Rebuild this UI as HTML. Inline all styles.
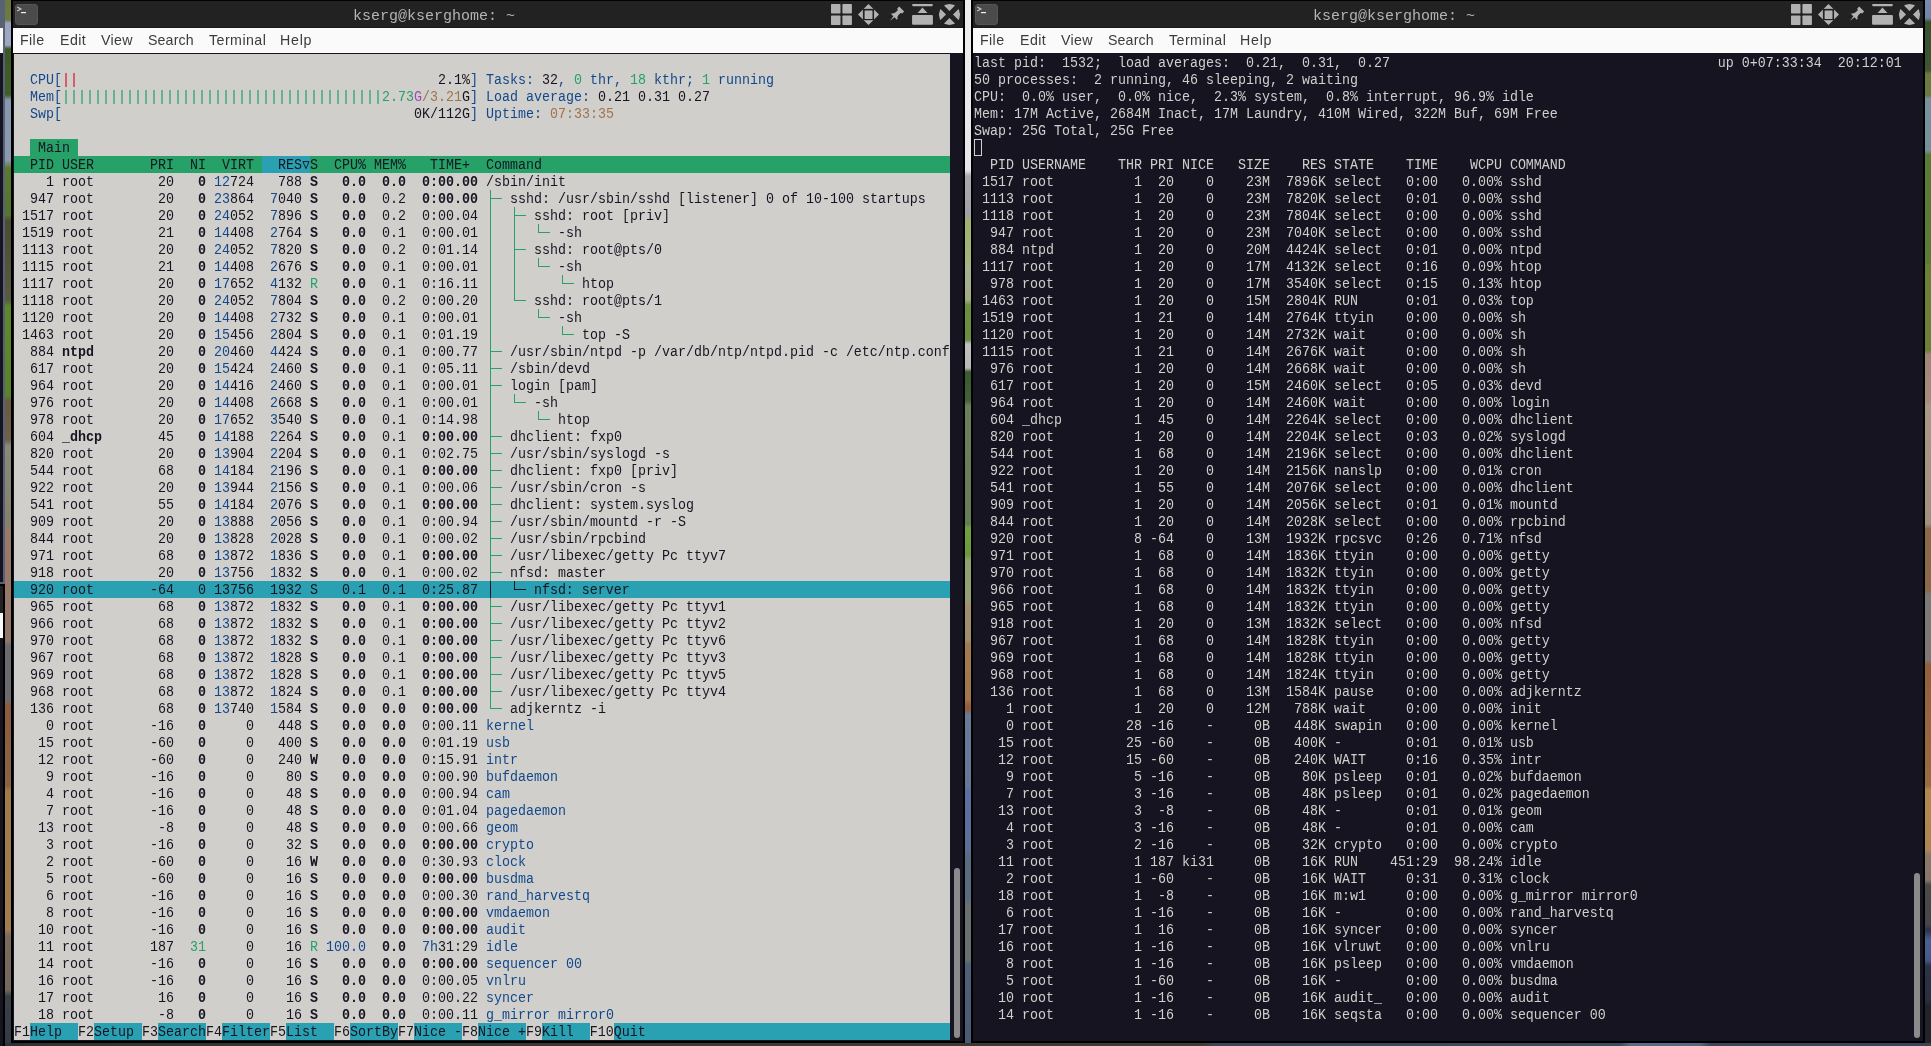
<!DOCTYPE html>
<html><head><meta charset="utf-8"><title>terminals</title><style>
html,body{margin:0;padding:0}
body{width:1931px;height:1046px;overflow:hidden;position:relative;background:#3c4438}
i{position:absolute;display:block}
p{position:absolute;margin:0;padding:0;white-space:pre;height:17px;line-height:17px;font-family:"Liberation Mono",monospace;font-size:13.333px;letter-spacing:0.0000px;font-weight:normal;transform-origin:0 12px;transform:translateY(1px) scaleY(1.1)}
#h,#t,.menu,.title{will-change:transform}
#h p{color:#171421}
#t p{color:#d0cfcc}
b{font-weight:normal}
b.B{font-weight:bold}
b.b_{color:#12488b}
b.g_{color:#26a269}
b.y_{color:#a2734c}
b.m_{color:#a347ba}
b.r_{color:#c01c28}
.title{position:absolute;top:4px;height:26px;line-height:25px;text-align:center;color:#b4b4b4;font-family:"Liberation Mono",monospace;font-size:15px;letter-spacing:0.0000px;white-space:pre}
.menu{position:absolute;top:28px;height:25px;line-height:25px;color:#3b3b3b;font-family:"Liberation Sans",sans-serif;font-size:14.2px;white-space:pre}
</style></head><body>
<i style="left:5px;top:0;width:6px;height:1046px;background:linear-gradient(#6a7840 0.00%,#6f7a48 1.91%,#9aa4c0 2.20%,#a0a8c4 4.30%,#3c5828 4.68%,#40602a 9.08%,#8898b0 9.56%,#8a9ab0 15.30%,#5a7a30 16.06%,#557530 20.55%,#4c4c32 21.13%,#5a5a40 28.68%,#5c8a2a 29.25%,#5a8428 37.76%,#6a5a40 38.43%,#70604a 42.07%,#8a8a78 42.64%,#84806e 50.10%,#9a7a68 50.76%,#94766a 61.19%,#6a6a70 61.76%,#6c6a6e 66.92%,#8a5c42 67.50%,#8a6244 75.14%,#a07a4a 75.62%,#a07c50 88.91%,#7a6a5a 89.48%,#74685c 94.65%,#3a4048 95.22%,#333a44 100.00%)"></i>
<i style="left:965px;top:0;width:6px;height:1046px;background:linear-gradient(#eeeef0 0.00%,#e6e6ea 16.25%,#a8a8b0 16.83%,#a0a0a8 20.55%,#a0b070 21.13%,#a4b27c 25.05%,#a8b090 25.62%,#a0ac84 28.68%,#6a9040 29.16%,#6a8c44 32.50%,#c0c0c0 32.89%,#b8b8b8 35.18%,#3a5a30 35.56%,#42603a 38.24%,#6a8058 38.81%,#667c54 50.10%,#70a040 50.48%,#6c9840 53.06%,#90a070 53.54%,#94a074 57.36%,#a09070 57.84%,#a08c6a 61.19%,#a07a50 61.66%,#a0764c 66.92%,#9a6040 67.30%,#905c40 67.88%,#6a7a98 68.26%,#64769a 75.14%,#5a70a0 75.53%,#5a6e98 81.26%,#5a6a80 81.74%,#5c6a7c 86.04%,#6a7070 86.52%,#667070 91.78%,#506078 92.26%,#4a5a72 100.00%)"></i>
<i style="left:1925px;top:0;width:6px;height:1046px;background:linear-gradient(#7a8ab0 0.00%,#7484a4 1.72%,#3a5030 2.10%,#3e5432 6.69%,#6a7a40 7.07%,#6a7a44 9.08%,#7a90a0 9.46%,#76909a 14.34%,#5a7a38 14.82%,#5c7a38 25.05%,#6a8038 25.43%,#6c7e3c 33.46%,#a08878 33.94%,#a48c7c 38.24%,#a89888 38.72%,#a09080 50.10%,#8a6848 50.57%,#886a4c 56.41%,#7a7a78 56.88%,#7c7874 63.10%,#90603c 63.58%,#9a6c42 75.14%,#b08850 75.53%,#ac8654 81.26%,#8a7a68 81.74%,#84766a 84.13%,#4a4a48 84.61%,#44464a 88.43%,#2a3448 88.91%,#4a6090 89.87%,#46588a 91.78%,#2a3448 92.35%,#283040 95.60%,#20242c 96.18%,#20242c 100.00%)"></i>
<i style="left:0;top:1043px;width:1931px;height:3px;background:linear-gradient(90deg,#171421 0.00%,#2c3038 0.26%,#30362e 3.11%,#343a30 25.89%,#3c3830 26.41%,#3e3a34 62.14%,#3a4658 62.92%,#3c4a5e 83.89%,#5a6a88 84.41%,#566684 88.04%,#3a4658 88.56%,#38445a 99.69%,#4a4038 100.00%)"></i>
<i style="left:0;top:0;width:5px;height:584px;background:#576275"></i>
<i style="left:0;top:28px;width:3px;height:25px;background:#fafafa"></i>
<i style="left:0;top:53px;width:3px;height:529px;background:#171421"></i>
<i style="left:0;top:584px;width:5px;height:462px;background:#000"></i>
<i style="left:0;top:586px;width:3px;height:27px;background:#222"></i>
<i style="left:0;top:613px;width:3px;height:25px;background:#fafafa"></i>
<i style="left:0;top:638px;width:3px;height:408px;background:#171421"></i>
<i style="left:11px;top:0;width:954px;height:1043px;background:#000"></i>
<i style="left:971px;top:0;width:954px;height:1043px;background:#000"></i>
<i style="left:13px;top:53px;width:950px;height:988px;background:#171421"></i>
<i style="left:973px;top:53px;width:950px;height:988px;background:#171421"></i>
<i style="left:13px;top:1px;width:950px;height:26px;background:#222222"></i>
<i style="left:13px;top:27px;width:950px;height:1px;background:#1a1a1a"></i>
<i style="left:13px;top:28px;width:950px;height:25px;background:#fafafa"></i>
<i style="left:15px;top:4px;width:21px;height:19px;background:#4b4b4b;border:1px solid #555;border-radius:3px"></i>
<svg style="position:absolute;left:15px;top:4px" width="23" height="21" viewBox="0 0 23 21"><path d="M2.2 3.1 L5.8 5 L2.2 6.9" fill="none" stroke="#c8c8c8" stroke-width="1.15"/><rect x="6" y="8" width="5" height="1.2" fill="#f0f0f0"/></svg>
<div class="title" style="left:40px;width:788px">kserg@kserghome: ~</div>
<svg style="position:absolute;left:830px;top:0px" width="133" height="28" viewBox="0 0 133 28"><rect x="1" y="4" width="9.5" height="9.4" rx="0.7" fill="#b2b2b2"/><rect x="1" y="15.5" width="9.5" height="9.4" rx="0.7" fill="#b2b2b2"/><rect x="12.4" y="4" width="9.5" height="9.4" rx="0.7" fill="#b2b2b2"/><rect x="12.4" y="15.5" width="9.5" height="9.4" rx="0.7" fill="#b2b2b2"/><path d="M38.5 3.9 L49 14.5 L38.5 25.1 L28 14.5 Z" fill="#b2b2b2"/><rect x="32.9" y="8.86" width="11.16" height="11.34" fill="#222222"/><rect x="34.6" y="10.4" width="7.9" height="8.55" rx="0.6" fill="#b2b2b2"/><g transform="translate(67.06,13.67) rotate(45)" fill="#b2b2b2"><path d="M-3.5,-6.5 L3.5,-6.5 L3.5,-3.8 L2,-3 L2,0 Q2.2,2.5 4.1,3.4 L4.1,4.4 L0.8,4.4 L0,10.1 L-0.8,4.4 L-4.1,4.4 L-4.1,3.4 Q-2.2,2.5 -2,0 L-2,-3 L-3.5,-3.8 Z"/></g><rect x="82.06" y="4.04" width="20.84" height="2.16" rx="1.08" fill="#b2b2b2"/><path d="M87.65 13.05 L92.47 7.46 L97.44 13.05 Z" fill="#b2b2b2"/><rect x="82.06" y="14.9" width="20.84" height="9.96" rx="1" fill="#b2b2b2"/><circle cx="119.5" cy="14.45" r="10.55" fill="#b2b2b2"/><path d="M109.5 4.45 L129.5 24.45 M129.5 4.45 L109.5 24.45" stroke="#222222" stroke-width="4.9"/></svg>
<span class="menu" style="left:20.42px;letter-spacing:0.389px">File</span>
<span class="menu" style="left:59.52px;letter-spacing:0.441px">Edit</span>
<span class="menu" style="left:101.02px;letter-spacing:0.324px">View</span>
<span class="menu" style="left:148.24px;letter-spacing:0.13px">Search</span>
<span class="menu" style="left:208.67px;letter-spacing:0.463px">Terminal</span>
<span class="menu" style="left:280.32px;letter-spacing:0.757px">Help</span>
<i style="left:973px;top:1px;width:950px;height:26px;background:#222222"></i>
<i style="left:973px;top:27px;width:950px;height:1px;background:#1a1a1a"></i>
<i style="left:973px;top:28px;width:950px;height:25px;background:#fafafa"></i>
<i style="left:975px;top:4px;width:21px;height:19px;background:#4b4b4b;border:1px solid #555;border-radius:3px"></i>
<svg style="position:absolute;left:975px;top:4px" width="23" height="21" viewBox="0 0 23 21"><path d="M2.2 3.1 L5.8 5 L2.2 6.9" fill="none" stroke="#c8c8c8" stroke-width="1.15"/><rect x="6" y="8" width="5" height="1.2" fill="#f0f0f0"/></svg>
<div class="title" style="left:1000px;width:788px">kserg@kserghome: ~</div>
<svg style="position:absolute;left:1790px;top:0px" width="133" height="28" viewBox="0 0 133 28"><rect x="1" y="4" width="9.5" height="9.4" rx="0.7" fill="#b2b2b2"/><rect x="1" y="15.5" width="9.5" height="9.4" rx="0.7" fill="#b2b2b2"/><rect x="12.4" y="4" width="9.5" height="9.4" rx="0.7" fill="#b2b2b2"/><rect x="12.4" y="15.5" width="9.5" height="9.4" rx="0.7" fill="#b2b2b2"/><path d="M38.5 3.9 L49 14.5 L38.5 25.1 L28 14.5 Z" fill="#b2b2b2"/><rect x="32.9" y="8.86" width="11.16" height="11.34" fill="#222222"/><rect x="34.6" y="10.4" width="7.9" height="8.55" rx="0.6" fill="#b2b2b2"/><g transform="translate(67.06,13.67) rotate(45)" fill="#b2b2b2"><path d="M-3.5,-6.5 L3.5,-6.5 L3.5,-3.8 L2,-3 L2,0 Q2.2,2.5 4.1,3.4 L4.1,4.4 L0.8,4.4 L0,10.1 L-0.8,4.4 L-4.1,4.4 L-4.1,3.4 Q-2.2,2.5 -2,0 L-2,-3 L-3.5,-3.8 Z"/></g><rect x="82.06" y="4.04" width="20.84" height="2.16" rx="1.08" fill="#b2b2b2"/><path d="M87.65 13.05 L92.47 7.46 L97.44 13.05 Z" fill="#b2b2b2"/><rect x="82.06" y="14.9" width="20.84" height="9.96" rx="1" fill="#b2b2b2"/><circle cx="119.5" cy="14.45" r="10.55" fill="#b2b2b2"/><path d="M109.5 4.45 L129.5 24.45 M129.5 4.45 L109.5 24.45" stroke="#222222" stroke-width="4.9"/></svg>
<span class="menu" style="left:980.42px;letter-spacing:0.389px">File</span>
<span class="menu" style="left:1019.52px;letter-spacing:0.441px">Edit</span>
<span class="menu" style="left:1061.02px;letter-spacing:0.324px">View</span>
<span class="menu" style="left:1108.24px;letter-spacing:0.13px">Search</span>
<span class="menu" style="left:1168.67px;letter-spacing:0.463px">Terminal</span>
<span class="menu" style="left:1240.32px;letter-spacing:0.757px">Help</span>
<i style="left:954px;top:868px;width:6px;height:170px;background:#8b8b8b;border-radius:3px"></i>
<i style="left:1914px;top:873px;width:6px;height:165px;background:#8b8b8b;border-radius:3px"></i>
<div id="h"><i style="left:14px;top:54px;width:936px;height:986px;background:#d0cfcc"></i>
<i style="left:30px;top:139px;width:48px;height:17px;background:#26a269"></i>
<i style="left:14px;top:156px;width:936px;height:17px;background:#26a269"></i>
<i style="left:262px;top:156px;width:48px;height:17px;background:#2aa1b3"></i>
<i style="left:14px;top:581px;width:936px;height:17px;background:#2aa1b3"></i>
<i style="left:30px;top:1023px;width:48px;height:17px;background:#2aa1b3"></i>
<i style="left:94px;top:1023px;width:48px;height:17px;background:#2aa1b3"></i>
<i style="left:158px;top:1023px;width:48px;height:17px;background:#2aa1b3"></i>
<i style="left:222px;top:1023px;width:48px;height:17px;background:#2aa1b3"></i>
<i style="left:286px;top:1023px;width:48px;height:17px;background:#2aa1b3"></i>
<i style="left:350px;top:1023px;width:48px;height:17px;background:#2aa1b3"></i>
<i style="left:414px;top:1023px;width:48px;height:17px;background:#2aa1b3"></i>
<i style="left:478px;top:1023px;width:48px;height:17px;background:#2aa1b3"></i>
<i style="left:542px;top:1023px;width:48px;height:17px;background:#2aa1b3"></i>
<i style="left:614px;top:1023px;width:336px;height:17px;background:#2aa1b3"></i>
<p style="left:14px;top:71px">  <b class="b_">CPU[</b>                                               2.1%<b class="b_">]</b> <b class="b_">Tasks: </b>32<b class="b_">, </b><b class="g_">0</b><b class="b_"> thr, </b><b class="g_">18</b><b class="b_"> kthr; </b><b class="g_">1</b><b class="b_"> running</b></p>
<p style="left:14px;top:88px">  <b class="b_">Mem[</b>                                        <b class="g_">2.73</b><b class="m_">G</b><b class="y_">/3.21</b>G<b class="b_">]</b> <b class="b_">Load average: </b>0.21 0.31 0.27</p>
<p style="left:14px;top:105px">  <b class="b_">Swp[</b>                                            0K/112G<b class="b_">]</b> <b class="b_">Uptime: </b><b class="y_">07:33:35</b></p>
<p style="left:14px;top:139px">   Main </p>
<p style="left:14px;top:156px">  PID USER       PRI  NI  VIRT   RES S  CPU% MEM%   TIME+  Command</p>
<p style="left:14px;top:173px">    1 root        20 <b class="B">  0</b> <b class="b_">12</b>724   788 <b class="B">S</b> <b class="B">  0.0</b>  <b class="B">0.0</b>  <b class="B">0:00.00</b> /sbin/init</p>
<p style="left:14px;top:190px">  947 root        20 <b class="B">  0</b> <b class="b_">23</b>864 <b class="b_"> 7</b>040 <b class="B">S</b> <b class="B">  0.0</b>  0.2  <b class="B">0:00.00</b>    sshd: /usr/sbin/sshd [listener] 0 of 10-100 startups</p>
<p style="left:14px;top:207px"> 1517 root        20 <b class="B">  0</b> <b class="b_">24</b>052 <b class="b_"> 7</b>896 <b class="B">S</b> <b class="B">  0.0</b>  0.2  0:00.04       sshd: root [priv]</p>
<p style="left:14px;top:224px"> 1519 root        21 <b class="B">  0</b> <b class="b_">14</b>408 <b class="b_"> 2</b>764 <b class="B">S</b> <b class="B">  0.0</b>  0.1  0:00.01          -sh</p>
<p style="left:14px;top:241px"> 1113 root        20 <b class="B">  0</b> <b class="b_">24</b>052 <b class="b_"> 7</b>820 <b class="B">S</b> <b class="B">  0.0</b>  0.2  0:01.14       sshd: root@pts/0</p>
<p style="left:14px;top:258px"> 1115 root        21 <b class="B">  0</b> <b class="b_">14</b>408 <b class="b_"> 2</b>676 <b class="B">S</b> <b class="B">  0.0</b>  0.1  0:00.01          -sh</p>
<p style="left:14px;top:275px"> 1117 root        20 <b class="B">  0</b> <b class="b_">17</b>652 <b class="b_"> 4</b>132 <b class="g_">R</b> <b class="B">  0.0</b>  0.1  0:16.11             htop</p>
<p style="left:14px;top:292px"> 1118 root        20 <b class="B">  0</b> <b class="b_">24</b>052 <b class="b_"> 7</b>804 <b class="B">S</b> <b class="B">  0.0</b>  0.2  0:00.20       sshd: root@pts/1</p>
<p style="left:14px;top:309px"> 1120 root        20 <b class="B">  0</b> <b class="b_">14</b>408 <b class="b_"> 2</b>732 <b class="B">S</b> <b class="B">  0.0</b>  0.1  0:00.01          -sh</p>
<p style="left:14px;top:326px"> 1463 root        20 <b class="B">  0</b> <b class="b_">15</b>456 <b class="b_"> 2</b>804 <b class="B">S</b> <b class="B">  0.0</b>  0.1  0:01.19             top -S</p>
<p style="left:14px;top:343px">  884 <b class="B">ntpd</b>        20 <b class="B">  0</b> <b class="b_">20</b>460 <b class="b_"> 4</b>424 <b class="B">S</b> <b class="B">  0.0</b>  0.1  0:00.77    /usr/sbin/ntpd -p /var/db/ntp/ntpd.pid -c /etc/ntp.conf</p>
<p style="left:14px;top:360px">  617 root        20 <b class="B">  0</b> <b class="b_">15</b>424 <b class="b_"> 2</b>460 <b class="B">S</b> <b class="B">  0.0</b>  0.1  0:05.11    /sbin/devd</p>
<p style="left:14px;top:377px">  964 root        20 <b class="B">  0</b> <b class="b_">14</b>416 <b class="b_"> 2</b>460 <b class="B">S</b> <b class="B">  0.0</b>  0.1  0:00.01    login [pam]</p>
<p style="left:14px;top:394px">  976 root        20 <b class="B">  0</b> <b class="b_">14</b>408 <b class="b_"> 2</b>668 <b class="B">S</b> <b class="B">  0.0</b>  0.1  0:00.01       -sh</p>
<p style="left:14px;top:411px">  978 root        20 <b class="B">  0</b> <b class="b_">17</b>652 <b class="b_"> 3</b>540 <b class="B">S</b> <b class="B">  0.0</b>  0.1  0:14.98          htop</p>
<p style="left:14px;top:428px">  604 <b class="B">_dhcp</b>       45 <b class="B">  0</b> <b class="b_">14</b>188 <b class="b_"> 2</b>264 <b class="B">S</b> <b class="B">  0.0</b>  0.1  <b class="B">0:00.00</b>    dhclient: fxp0</p>
<p style="left:14px;top:445px">  820 root        20 <b class="B">  0</b> <b class="b_">13</b>904 <b class="b_"> 2</b>204 <b class="B">S</b> <b class="B">  0.0</b>  0.1  0:02.75    /usr/sbin/syslogd -s</p>
<p style="left:14px;top:462px">  544 root        68 <b class="B">  0</b> <b class="b_">14</b>184 <b class="b_"> 2</b>196 <b class="B">S</b> <b class="B">  0.0</b>  0.1  <b class="B">0:00.00</b>    dhclient: fxp0 [priv]</p>
<p style="left:14px;top:479px">  922 root        20 <b class="B">  0</b> <b class="b_">13</b>944 <b class="b_"> 2</b>156 <b class="B">S</b> <b class="B">  0.0</b>  0.1  0:00.06    /usr/sbin/cron -s</p>
<p style="left:14px;top:496px">  541 root        55 <b class="B">  0</b> <b class="b_">14</b>184 <b class="b_"> 2</b>076 <b class="B">S</b> <b class="B">  0.0</b>  0.1  <b class="B">0:00.00</b>    dhclient: system.syslog</p>
<p style="left:14px;top:513px">  909 root        20 <b class="B">  0</b> <b class="b_">13</b>888 <b class="b_"> 2</b>056 <b class="B">S</b> <b class="B">  0.0</b>  0.1  0:00.94    /usr/sbin/mountd -r -S</p>
<p style="left:14px;top:530px">  844 root        20 <b class="B">  0</b> <b class="b_">13</b>828 <b class="b_"> 2</b>028 <b class="B">S</b> <b class="B">  0.0</b>  0.1  0:00.02    /usr/sbin/rpcbind</p>
<p style="left:14px;top:547px">  971 root        68 <b class="B">  0</b> <b class="b_">13</b>872 <b class="b_"> 1</b>836 <b class="B">S</b> <b class="B">  0.0</b>  0.1  <b class="B">0:00.00</b>    /usr/libexec/getty Pc ttyv7</p>
<p style="left:14px;top:564px">  918 root        20 <b class="B">  0</b> <b class="b_">13</b>756 <b class="b_"> 1</b>832 <b class="B">S</b> <b class="B">  0.0</b>  0.1  0:00.02    nfsd: master</p>
<p style="left:14px;top:581px">  920 root       -64   0 13756  1932 S   0.1  0.1  0:25.87       nfsd: server</p>
<p style="left:14px;top:598px">  965 root        68 <b class="B">  0</b> <b class="b_">13</b>872 <b class="b_"> 1</b>832 <b class="B">S</b> <b class="B">  0.0</b>  0.1  <b class="B">0:00.00</b>    /usr/libexec/getty Pc ttyv1</p>
<p style="left:14px;top:615px">  966 root        68 <b class="B">  0</b> <b class="b_">13</b>872 <b class="b_"> 1</b>832 <b class="B">S</b> <b class="B">  0.0</b>  0.1  <b class="B">0:00.00</b>    /usr/libexec/getty Pc ttyv2</p>
<p style="left:14px;top:632px">  970 root        68 <b class="B">  0</b> <b class="b_">13</b>872 <b class="b_"> 1</b>832 <b class="B">S</b> <b class="B">  0.0</b>  0.1  <b class="B">0:00.00</b>    /usr/libexec/getty Pc ttyv6</p>
<p style="left:14px;top:649px">  967 root        68 <b class="B">  0</b> <b class="b_">13</b>872 <b class="b_"> 1</b>828 <b class="B">S</b> <b class="B">  0.0</b>  0.1  <b class="B">0:00.00</b>    /usr/libexec/getty Pc ttyv3</p>
<p style="left:14px;top:666px">  969 root        68 <b class="B">  0</b> <b class="b_">13</b>872 <b class="b_"> 1</b>828 <b class="B">S</b> <b class="B">  0.0</b>  0.1  <b class="B">0:00.00</b>    /usr/libexec/getty Pc ttyv5</p>
<p style="left:14px;top:683px">  968 root        68 <b class="B">  0</b> <b class="b_">13</b>872 <b class="b_"> 1</b>824 <b class="B">S</b> <b class="B">  0.0</b>  0.1  <b class="B">0:00.00</b>    /usr/libexec/getty Pc ttyv4</p>
<p style="left:14px;top:700px">  136 root        68 <b class="B">  0</b> <b class="b_">13</b>740 <b class="b_"> 1</b>584 <b class="B">S</b> <b class="B">  0.0</b>  <b class="B">0.0</b>  <b class="B">0:00.00</b>    adjkerntz -i</p>
<p style="left:14px;top:717px">    0 root       -16 <b class="B">  0</b>     0   448 <b class="B">S</b> <b class="B">  0.0</b>  <b class="B">0.0</b>  0:00.11 <b class="b_">kernel</b></p>
<p style="left:14px;top:734px">   15 root       -60 <b class="B">  0</b>     0   400 <b class="B">S</b> <b class="B">  0.0</b>  <b class="B">0.0</b>  0:01.19 <b class="b_">usb</b></p>
<p style="left:14px;top:751px">   12 root       -60 <b class="B">  0</b>     0   240 <b class="B">W</b> <b class="B">  0.0</b>  <b class="B">0.0</b>  0:15.91 <b class="b_">intr</b></p>
<p style="left:14px;top:768px">    9 root       -16 <b class="B">  0</b>     0    80 <b class="B">S</b> <b class="B">  0.0</b>  <b class="B">0.0</b>  0:00.90 <b class="b_">bufdaemon</b></p>
<p style="left:14px;top:785px">    4 root       -16 <b class="B">  0</b>     0    48 <b class="B">S</b> <b class="B">  0.0</b>  <b class="B">0.0</b>  0:00.94 <b class="b_">cam</b></p>
<p style="left:14px;top:802px">    7 root       -16 <b class="B">  0</b>     0    48 <b class="B">S</b> <b class="B">  0.0</b>  <b class="B">0.0</b>  0:01.04 <b class="b_">pagedaemon</b></p>
<p style="left:14px;top:819px">   13 root        -8 <b class="B">  0</b>     0    48 <b class="B">S</b> <b class="B">  0.0</b>  <b class="B">0.0</b>  0:00.66 <b class="b_">geom</b></p>
<p style="left:14px;top:836px">    3 root       -16 <b class="B">  0</b>     0    32 <b class="B">S</b> <b class="B">  0.0</b>  <b class="B">0.0</b>  <b class="B">0:00.00</b> <b class="b_">crypto</b></p>
<p style="left:14px;top:853px">    2 root       -60 <b class="B">  0</b>     0    16 <b class="B">W</b> <b class="B">  0.0</b>  <b class="B">0.0</b>  0:30.93 <b class="b_">clock</b></p>
<p style="left:14px;top:870px">    5 root       -60 <b class="B">  0</b>     0    16 <b class="B">S</b> <b class="B">  0.0</b>  <b class="B">0.0</b>  <b class="B">0:00.00</b> <b class="b_">busdma</b></p>
<p style="left:14px;top:887px">    6 root       -16 <b class="B">  0</b>     0    16 <b class="B">S</b> <b class="B">  0.0</b>  <b class="B">0.0</b>  0:00.30 <b class="b_">rand_harvestq</b></p>
<p style="left:14px;top:904px">    8 root       -16 <b class="B">  0</b>     0    16 <b class="B">S</b> <b class="B">  0.0</b>  <b class="B">0.0</b>  <b class="B">0:00.00</b> <b class="b_">vmdaemon</b></p>
<p style="left:14px;top:921px">   10 root       -16 <b class="B">  0</b>     0    16 <b class="B">S</b> <b class="B">  0.0</b>  <b class="B">0.0</b>  <b class="B">0:00.00</b> <b class="b_">audit</b></p>
<p style="left:14px;top:938px">   11 root       187 <b class="g_"> 31</b>     0    16 <b class="g_">R</b> <b class="b_">100.0</b>  <b class="B">0.0</b>  <b class="b_">7h</b>31:29 <b class="b_">idle</b></p>
<p style="left:14px;top:955px">   14 root       -16 <b class="B">  0</b>     0    16 <b class="B">S</b> <b class="B">  0.0</b>  <b class="B">0.0</b>  <b class="B">0:00.00</b> <b class="b_">sequencer 00</b></p>
<p style="left:14px;top:972px">   16 root       -16 <b class="B">  0</b>     0    16 <b class="B">S</b> <b class="B">  0.0</b>  <b class="B">0.0</b>  0:00.05 <b class="b_">vnlru</b></p>
<p style="left:14px;top:989px">   17 root        16 <b class="B">  0</b>     0    16 <b class="B">S</b> <b class="B">  0.0</b>  <b class="B">0.0</b>  0:00.22 <b class="b_">syncer</b></p>
<p style="left:14px;top:1006px">   18 root        -8 <b class="B">  0</b>     0    16 <b class="B">S</b> <b class="B">  0.0</b>  <b class="B">0.0</b>  0:00.11 <b class="b_">g_mirror mirror0</b></p>
<p style="left:14px;top:1023px">F1Help  F2Setup F3SearchF4FilterF5List  F6SortByF7Nice -F8Nice +F9Kill  F10Quit</p>
<i style="left:65px;top:73px;width:2px;height:14px;background:#cf6069"></i>
<i style="left:73px;top:73px;width:2px;height:14px;background:#cf6069"></i>
<i style="left:65px;top:90px;width:2px;height:14px;background:#62b58d"></i>
<i style="left:73px;top:90px;width:2px;height:14px;background:#62b58d"></i>
<i style="left:81px;top:90px;width:2px;height:14px;background:#62b58d"></i>
<i style="left:89px;top:90px;width:2px;height:14px;background:#62b58d"></i>
<i style="left:97px;top:90px;width:2px;height:14px;background:#62b58d"></i>
<i style="left:105px;top:90px;width:2px;height:14px;background:#62b58d"></i>
<i style="left:113px;top:90px;width:2px;height:14px;background:#62b58d"></i>
<i style="left:121px;top:90px;width:2px;height:14px;background:#62b58d"></i>
<i style="left:129px;top:90px;width:2px;height:14px;background:#62b58d"></i>
<i style="left:137px;top:90px;width:2px;height:14px;background:#62b58d"></i>
<i style="left:145px;top:90px;width:2px;height:14px;background:#62b58d"></i>
<i style="left:153px;top:90px;width:2px;height:14px;background:#62b58d"></i>
<i style="left:161px;top:90px;width:2px;height:14px;background:#62b58d"></i>
<i style="left:169px;top:90px;width:2px;height:14px;background:#62b58d"></i>
<i style="left:177px;top:90px;width:2px;height:14px;background:#62b58d"></i>
<i style="left:185px;top:90px;width:2px;height:14px;background:#62b58d"></i>
<i style="left:193px;top:90px;width:2px;height:14px;background:#62b58d"></i>
<i style="left:201px;top:90px;width:2px;height:14px;background:#62b58d"></i>
<i style="left:209px;top:90px;width:2px;height:14px;background:#62b58d"></i>
<i style="left:217px;top:90px;width:2px;height:14px;background:#62b58d"></i>
<i style="left:225px;top:90px;width:2px;height:14px;background:#62b58d"></i>
<i style="left:233px;top:90px;width:2px;height:14px;background:#62b58d"></i>
<i style="left:241px;top:90px;width:2px;height:14px;background:#62b58d"></i>
<i style="left:249px;top:90px;width:2px;height:14px;background:#62b58d"></i>
<i style="left:257px;top:90px;width:2px;height:14px;background:#62b58d"></i>
<i style="left:265px;top:90px;width:2px;height:14px;background:#62b58d"></i>
<i style="left:273px;top:90px;width:2px;height:14px;background:#62b58d"></i>
<i style="left:281px;top:90px;width:2px;height:14px;background:#62b58d"></i>
<i style="left:289px;top:90px;width:2px;height:14px;background:#62b58d"></i>
<i style="left:297px;top:90px;width:2px;height:14px;background:#62b58d"></i>
<i style="left:305px;top:90px;width:2px;height:14px;background:#62b58d"></i>
<i style="left:313px;top:90px;width:2px;height:14px;background:#62b58d"></i>
<i style="left:321px;top:90px;width:2px;height:14px;background:#62b58d"></i>
<i style="left:329px;top:90px;width:2px;height:14px;background:#62b58d"></i>
<i style="left:337px;top:90px;width:2px;height:14px;background:#62b58d"></i>
<i style="left:345px;top:90px;width:2px;height:14px;background:#62b58d"></i>
<i style="left:353px;top:90px;width:2px;height:14px;background:#62b58d"></i>
<i style="left:361px;top:90px;width:2px;height:14px;background:#62b58d"></i>
<i style="left:369px;top:90px;width:2px;height:14px;background:#62b58d"></i>
<i style="left:377px;top:90px;width:2px;height:14px;background:#62b58d"></i>
<svg style="position:absolute;left:302px;top:156px" width="8" height="17" viewBox="0 0 8 17"><path d="M0.9 5.6 L7.1 5.6 L4 12.6 Z" fill="none" stroke="#171421" stroke-width="0.95"/></svg>
<i style="left:490px;top:190px;width:1px;height:17px;background:#26a269"></i>
<i style="left:490px;top:198px;width:4px;height:1px;background:#26a269"></i>
<i style="left:494px;top:198px;width:8px;height:1px;background:#26a269"></i>
<i style="left:490px;top:207px;width:1px;height:17px;background:#26a269"></i>
<i style="left:514px;top:207px;width:1px;height:17px;background:#26a269"></i>
<i style="left:514px;top:215px;width:4px;height:1px;background:#26a269"></i>
<i style="left:518px;top:215px;width:8px;height:1px;background:#26a269"></i>
<i style="left:490px;top:224px;width:1px;height:17px;background:#26a269"></i>
<i style="left:514px;top:224px;width:1px;height:17px;background:#26a269"></i>
<i style="left:538px;top:224px;width:1px;height:9px;background:#26a269"></i>
<i style="left:538px;top:232px;width:4px;height:1px;background:#26a269"></i>
<i style="left:542px;top:232px;width:8px;height:1px;background:#26a269"></i>
<i style="left:490px;top:241px;width:1px;height:17px;background:#26a269"></i>
<i style="left:514px;top:241px;width:1px;height:17px;background:#26a269"></i>
<i style="left:514px;top:249px;width:4px;height:1px;background:#26a269"></i>
<i style="left:518px;top:249px;width:8px;height:1px;background:#26a269"></i>
<i style="left:490px;top:258px;width:1px;height:17px;background:#26a269"></i>
<i style="left:514px;top:258px;width:1px;height:17px;background:#26a269"></i>
<i style="left:538px;top:258px;width:1px;height:9px;background:#26a269"></i>
<i style="left:538px;top:266px;width:4px;height:1px;background:#26a269"></i>
<i style="left:542px;top:266px;width:8px;height:1px;background:#26a269"></i>
<i style="left:490px;top:275px;width:1px;height:17px;background:#26a269"></i>
<i style="left:514px;top:275px;width:1px;height:17px;background:#26a269"></i>
<i style="left:562px;top:275px;width:1px;height:9px;background:#26a269"></i>
<i style="left:562px;top:283px;width:4px;height:1px;background:#26a269"></i>
<i style="left:566px;top:283px;width:8px;height:1px;background:#26a269"></i>
<i style="left:490px;top:292px;width:1px;height:17px;background:#26a269"></i>
<i style="left:514px;top:292px;width:1px;height:9px;background:#26a269"></i>
<i style="left:514px;top:300px;width:4px;height:1px;background:#26a269"></i>
<i style="left:518px;top:300px;width:8px;height:1px;background:#26a269"></i>
<i style="left:490px;top:309px;width:1px;height:17px;background:#26a269"></i>
<i style="left:538px;top:309px;width:1px;height:9px;background:#26a269"></i>
<i style="left:538px;top:317px;width:4px;height:1px;background:#26a269"></i>
<i style="left:542px;top:317px;width:8px;height:1px;background:#26a269"></i>
<i style="left:490px;top:326px;width:1px;height:17px;background:#26a269"></i>
<i style="left:562px;top:326px;width:1px;height:9px;background:#26a269"></i>
<i style="left:562px;top:334px;width:4px;height:1px;background:#26a269"></i>
<i style="left:566px;top:334px;width:8px;height:1px;background:#26a269"></i>
<i style="left:490px;top:343px;width:1px;height:17px;background:#26a269"></i>
<i style="left:490px;top:351px;width:4px;height:1px;background:#26a269"></i>
<i style="left:494px;top:351px;width:8px;height:1px;background:#26a269"></i>
<i style="left:490px;top:360px;width:1px;height:17px;background:#26a269"></i>
<i style="left:490px;top:368px;width:4px;height:1px;background:#26a269"></i>
<i style="left:494px;top:368px;width:8px;height:1px;background:#26a269"></i>
<i style="left:490px;top:377px;width:1px;height:17px;background:#26a269"></i>
<i style="left:490px;top:385px;width:4px;height:1px;background:#26a269"></i>
<i style="left:494px;top:385px;width:8px;height:1px;background:#26a269"></i>
<i style="left:490px;top:394px;width:1px;height:17px;background:#26a269"></i>
<i style="left:514px;top:394px;width:1px;height:9px;background:#26a269"></i>
<i style="left:514px;top:402px;width:4px;height:1px;background:#26a269"></i>
<i style="left:518px;top:402px;width:8px;height:1px;background:#26a269"></i>
<i style="left:490px;top:411px;width:1px;height:17px;background:#26a269"></i>
<i style="left:538px;top:411px;width:1px;height:9px;background:#26a269"></i>
<i style="left:538px;top:419px;width:4px;height:1px;background:#26a269"></i>
<i style="left:542px;top:419px;width:8px;height:1px;background:#26a269"></i>
<i style="left:490px;top:428px;width:1px;height:17px;background:#26a269"></i>
<i style="left:490px;top:436px;width:4px;height:1px;background:#26a269"></i>
<i style="left:494px;top:436px;width:8px;height:1px;background:#26a269"></i>
<i style="left:490px;top:445px;width:1px;height:17px;background:#26a269"></i>
<i style="left:490px;top:453px;width:4px;height:1px;background:#26a269"></i>
<i style="left:494px;top:453px;width:8px;height:1px;background:#26a269"></i>
<i style="left:490px;top:462px;width:1px;height:17px;background:#26a269"></i>
<i style="left:490px;top:470px;width:4px;height:1px;background:#26a269"></i>
<i style="left:494px;top:470px;width:8px;height:1px;background:#26a269"></i>
<i style="left:490px;top:479px;width:1px;height:17px;background:#26a269"></i>
<i style="left:490px;top:487px;width:4px;height:1px;background:#26a269"></i>
<i style="left:494px;top:487px;width:8px;height:1px;background:#26a269"></i>
<i style="left:490px;top:496px;width:1px;height:17px;background:#26a269"></i>
<i style="left:490px;top:504px;width:4px;height:1px;background:#26a269"></i>
<i style="left:494px;top:504px;width:8px;height:1px;background:#26a269"></i>
<i style="left:490px;top:513px;width:1px;height:17px;background:#26a269"></i>
<i style="left:490px;top:521px;width:4px;height:1px;background:#26a269"></i>
<i style="left:494px;top:521px;width:8px;height:1px;background:#26a269"></i>
<i style="left:490px;top:530px;width:1px;height:17px;background:#26a269"></i>
<i style="left:490px;top:538px;width:4px;height:1px;background:#26a269"></i>
<i style="left:494px;top:538px;width:8px;height:1px;background:#26a269"></i>
<i style="left:490px;top:547px;width:1px;height:17px;background:#26a269"></i>
<i style="left:490px;top:555px;width:4px;height:1px;background:#26a269"></i>
<i style="left:494px;top:555px;width:8px;height:1px;background:#26a269"></i>
<i style="left:490px;top:564px;width:1px;height:17px;background:#26a269"></i>
<i style="left:490px;top:572px;width:4px;height:1px;background:#26a269"></i>
<i style="left:494px;top:572px;width:8px;height:1px;background:#26a269"></i>
<i style="left:490px;top:581px;width:1px;height:17px;background:#171421"></i>
<i style="left:514px;top:581px;width:1px;height:9px;background:#171421"></i>
<i style="left:514px;top:589px;width:4px;height:1px;background:#171421"></i>
<i style="left:518px;top:589px;width:8px;height:1px;background:#171421"></i>
<i style="left:490px;top:598px;width:1px;height:17px;background:#26a269"></i>
<i style="left:490px;top:606px;width:4px;height:1px;background:#26a269"></i>
<i style="left:494px;top:606px;width:8px;height:1px;background:#26a269"></i>
<i style="left:490px;top:615px;width:1px;height:17px;background:#26a269"></i>
<i style="left:490px;top:623px;width:4px;height:1px;background:#26a269"></i>
<i style="left:494px;top:623px;width:8px;height:1px;background:#26a269"></i>
<i style="left:490px;top:632px;width:1px;height:17px;background:#26a269"></i>
<i style="left:490px;top:640px;width:4px;height:1px;background:#26a269"></i>
<i style="left:494px;top:640px;width:8px;height:1px;background:#26a269"></i>
<i style="left:490px;top:649px;width:1px;height:17px;background:#26a269"></i>
<i style="left:490px;top:657px;width:4px;height:1px;background:#26a269"></i>
<i style="left:494px;top:657px;width:8px;height:1px;background:#26a269"></i>
<i style="left:490px;top:666px;width:1px;height:17px;background:#26a269"></i>
<i style="left:490px;top:674px;width:4px;height:1px;background:#26a269"></i>
<i style="left:494px;top:674px;width:8px;height:1px;background:#26a269"></i>
<i style="left:490px;top:683px;width:1px;height:17px;background:#26a269"></i>
<i style="left:490px;top:691px;width:4px;height:1px;background:#26a269"></i>
<i style="left:494px;top:691px;width:8px;height:1px;background:#26a269"></i>
<i style="left:490px;top:700px;width:1px;height:9px;background:#26a269"></i>
<i style="left:490px;top:708px;width:4px;height:1px;background:#26a269"></i>
<i style="left:494px;top:708px;width:8px;height:1px;background:#26a269"></i></div>
<div id="t"><p style="left:974px;top:54px">last pid:  1532;  load averages:  0.21,  0.31,  0.27                                         up 0+07:33:34  20:12:01</p>
<p style="left:974px;top:71px">50 processes:  2 running, 46 sleeping, 2 waiting</p>
<p style="left:974px;top:88px">CPU:  0.0% user,  0.0% nice,  2.3% system,  0.8% interrupt, 96.9% idle</p>
<p style="left:974px;top:105px">Mem: 17M Active, 2684M Inact, 17M Laundry, 410M Wired, 322M Buf, 69M Free</p>
<p style="left:974px;top:122px">Swap: 25G Total, 25G Free</p>
<p style="left:974px;top:156px">  PID USERNAME    THR PRI NICE   SIZE    RES STATE    TIME    WCPU COMMAND</p>
<p style="left:974px;top:173px"> 1517 root          1  20    0    23M  7896K select   0:00   0.00% sshd</p>
<p style="left:974px;top:190px"> 1113 root          1  20    0    23M  7820K select   0:01   0.00% sshd</p>
<p style="left:974px;top:207px"> 1118 root          1  20    0    23M  7804K select   0:00   0.00% sshd</p>
<p style="left:974px;top:224px">  947 root          1  20    0    23M  7040K select   0:00   0.00% sshd</p>
<p style="left:974px;top:241px">  884 ntpd          1  20    0    20M  4424K select   0:01   0.00% ntpd</p>
<p style="left:974px;top:258px"> 1117 root          1  20    0    17M  4132K select   0:16   0.09% htop</p>
<p style="left:974px;top:275px">  978 root          1  20    0    17M  3540K select   0:15   0.13% htop</p>
<p style="left:974px;top:292px"> 1463 root          1  20    0    15M  2804K RUN      0:01   0.03% top</p>
<p style="left:974px;top:309px"> 1519 root          1  21    0    14M  2764K ttyin    0:00   0.00% sh</p>
<p style="left:974px;top:326px"> 1120 root          1  20    0    14M  2732K wait     0:00   0.00% sh</p>
<p style="left:974px;top:343px"> 1115 root          1  21    0    14M  2676K wait     0:00   0.00% sh</p>
<p style="left:974px;top:360px">  976 root          1  20    0    14M  2668K wait     0:00   0.00% sh</p>
<p style="left:974px;top:377px">  617 root          1  20    0    15M  2460K select   0:05   0.03% devd</p>
<p style="left:974px;top:394px">  964 root          1  20    0    14M  2460K wait     0:00   0.00% login</p>
<p style="left:974px;top:411px">  604 _dhcp         1  45    0    14M  2264K select   0:00   0.00% dhclient</p>
<p style="left:974px;top:428px">  820 root          1  20    0    14M  2204K select   0:03   0.02% syslogd</p>
<p style="left:974px;top:445px">  544 root          1  68    0    14M  2196K select   0:00   0.00% dhclient</p>
<p style="left:974px;top:462px">  922 root          1  20    0    14M  2156K nanslp   0:00   0.01% cron</p>
<p style="left:974px;top:479px">  541 root          1  55    0    14M  2076K select   0:00   0.00% dhclient</p>
<p style="left:974px;top:496px">  909 root          1  20    0    14M  2056K select   0:01   0.01% mountd</p>
<p style="left:974px;top:513px">  844 root          1  20    0    14M  2028K select   0:00   0.00% rpcbind</p>
<p style="left:974px;top:530px">  920 root          8 -64    0    13M  1932K rpcsvc   0:26   0.71% nfsd</p>
<p style="left:974px;top:547px">  971 root          1  68    0    14M  1836K ttyin    0:00   0.00% getty</p>
<p style="left:974px;top:564px">  970 root          1  68    0    14M  1832K ttyin    0:00   0.00% getty</p>
<p style="left:974px;top:581px">  966 root          1  68    0    14M  1832K ttyin    0:00   0.00% getty</p>
<p style="left:974px;top:598px">  965 root          1  68    0    14M  1832K ttyin    0:00   0.00% getty</p>
<p style="left:974px;top:615px">  918 root          1  20    0    13M  1832K select   0:00   0.00% nfsd</p>
<p style="left:974px;top:632px">  967 root          1  68    0    14M  1828K ttyin    0:00   0.00% getty</p>
<p style="left:974px;top:649px">  969 root          1  68    0    14M  1828K ttyin    0:00   0.00% getty</p>
<p style="left:974px;top:666px">  968 root          1  68    0    14M  1824K ttyin    0:00   0.00% getty</p>
<p style="left:974px;top:683px">  136 root          1  68    0    13M  1584K pause    0:00   0.00% adjkerntz</p>
<p style="left:974px;top:700px">    1 root          1  20    0    12M   788K wait     0:00   0.00% init</p>
<p style="left:974px;top:717px">    0 root         28 -16    -     0B   448K swapin   0:00   0.00% kernel</p>
<p style="left:974px;top:734px">   15 root         25 -60    -     0B   400K -        0:01   0.01% usb</p>
<p style="left:974px;top:751px">   12 root         15 -60    -     0B   240K WAIT     0:16   0.35% intr</p>
<p style="left:974px;top:768px">    9 root          5 -16    -     0B    80K psleep   0:01   0.02% bufdaemon</p>
<p style="left:974px;top:785px">    7 root          3 -16    -     0B    48K psleep   0:01   0.02% pagedaemon</p>
<p style="left:974px;top:802px">   13 root          3  -8    -     0B    48K -        0:01   0.01% geom</p>
<p style="left:974px;top:819px">    4 root          3 -16    -     0B    48K -        0:01   0.00% cam</p>
<p style="left:974px;top:836px">    3 root          2 -16    -     0B    32K crypto   0:00   0.00% crypto</p>
<p style="left:974px;top:853px">   11 root          1 187 ki31     0B    16K RUN    451:29  98.24% idle</p>
<p style="left:974px;top:870px">    2 root          1 -60    -     0B    16K WAIT     0:31   0.31% clock</p>
<p style="left:974px;top:887px">   18 root          1  -8    -     0B    16K m:w1     0:00   0.00% g_mirror mirror0</p>
<p style="left:974px;top:904px">    6 root          1 -16    -     0B    16K -        0:00   0.00% rand_harvestq</p>
<p style="left:974px;top:921px">   17 root          1  16    -     0B    16K syncer   0:00   0.00% syncer</p>
<p style="left:974px;top:938px">   16 root          1 -16    -     0B    16K vlruwt   0:00   0.00% vnlru</p>
<p style="left:974px;top:955px">    8 root          1 -16    -     0B    16K psleep   0:00   0.00% vmdaemon</p>
<p style="left:974px;top:972px">    5 root          1 -60    -     0B    16K -        0:00   0.00% busdma</p>
<p style="left:974px;top:989px">   10 root          1 -16    -     0B    16K audit_   0:00   0.00% audit</p>
<p style="left:974px;top:1006px">   14 root          1 -16    -     0B    16K seqsta   0:00   0.00% sequencer 00</p>
<i style="left:974px;top:139px;width:6px;height:15px;border:1px solid #d0cfcc;background:none"></i></div>
</body></html>
